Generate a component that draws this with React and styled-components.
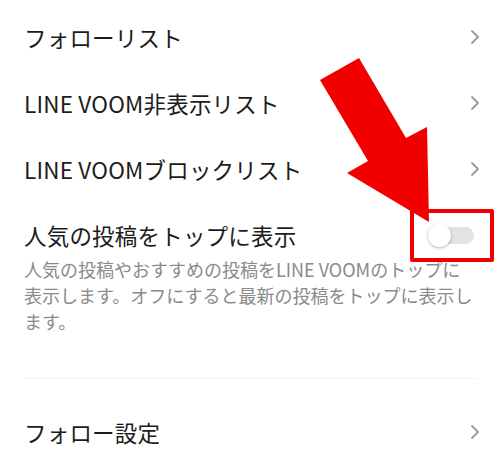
import React from 'react';
import styled, { createGlobalStyle } from 'styled-components';

const GlobalStyle = createGlobalStyle`
  body {
    margin: 0;
    background: #ffffff;
    font-family: "Noto Sans CJK JP", "Noto Sans", sans-serif;
  }
`;

const Page = styled.div`
  position: relative;
  width: 500px;
  height: 475px;
  overflow: hidden;
  background: #fff;
  padding: 4px 20px 0 24px;
  box-sizing: border-box;
`;

const NavRow = styled.div`
  height: 66px;
  display: flex;
  align-items: center;
  justify-content: space-between;
`;

const Title = styled.span`
  font-size: 22.5px;
  color: #1c1c1c;
  letter-spacing: 0.2px;
`;

const ToggleRow = styled.div`
  height: 50px;
  margin-top: 8px;
  display: flex;
  align-items: center;
  justify-content: space-between;
`;

const Description = styled.p`
  margin: -4px 4px 0 0;
  font-size: 18px;
  line-height: 26px;
  color: #8a8a8a;
`;

const Divider = styled.hr`
  border: 0;
  height: 1px;
  background: #f1f1f1;
  margin: 44px 4px 20px 0;
`;

const Track = styled.div`
  position: relative;
  width: 42px;
  height: 17px;
  border-radius: 9px;
  background: #e3e3e3;
  margin-right: 6px;
`;

const Knob = styled.div`
  position: absolute;
  left: -4px;
  top: 50%;
  width: 23px;
  height: 23px;
  margin-top: -11.5px;
  border-radius: 50%;
  background: #fff;
  box-shadow: 0 1px 3px rgba(0, 0, 0, 0.3);
`;

const Highlight = styled.div`
  position: absolute;
  left: 410px;
  top: 209px;
  width: 84px;
  height: 53px;
  border: 4px solid #f20000;
  border-radius: 2px;
  box-sizing: border-box;
  pointer-events: none;
`;

const ArrowMark = styled.svg`
  position: absolute;
  left: 318px;
  top: 55px;
  pointer-events: none;
`;

const Chevron = () => (
  <svg width="10" height="16" viewBox="0 0 10 16">
    <polyline points="2,2 8,8 2,14" fill="none" stroke="#9a9a9a" strokeWidth="1.8" strokeLinecap="round" strokeLinejoin="round" />
  </svg>
);

const Toggle = () => (
  <Track>
    <Knob />
  </Track>
);

const links = ['フォローリスト', 'LINE VOOM非表示リスト', 'LINE VOOMブロックリスト'];

export default function App() {
  return (
    <Page>
      <GlobalStyle />
      {links.map((label) => (
        <NavRow key={label}>
          <Title>{label}</Title>
          <Chevron />
        </NavRow>
      ))}
      <ToggleRow>
        <Title>人気の投稿をトップに表示</Title>
        <Toggle />
      </ToggleRow>
      <Description>
        人気の投稿やおすすめの投稿をLINE VOOMのトップに表示します。オフにすると最新の投稿をトップに表示します。
      </Description>
      <Divider />
      <NavRow>
        <Title>フォロー設定</Title>
        <Chevron />
      </NavRow>

      <Highlight />
      <ArrowMark width="115" height="170" viewBox="0 0 115 170">
        <polygon points="2,25 41,3 88,83 109,72 111,167 29,118 50,106" fill="#f20000" />
      </ArrowMark>
    </Page>
  );
}
